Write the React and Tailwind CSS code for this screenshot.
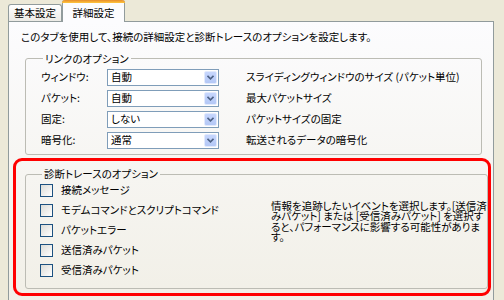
import React from "react";

const font = "font-['MS_UI_Gothic','Noto_Sans_CJK_JP',sans-serif] [font-feature-settings:'palt']";

function Combo({ value }) {
  return (
    <div className="w-[112px] h-[17px] border border-[#7F9DB9] bg-white flex items-center justify-between pl-[3px] pr-px">
      <span className="text-[10.5px] leading-none text-black">{value}</span>
      <div className="w-[13px] h-[13px] rounded-[2px] border border-[#E2EAFD] bg-gradient-to-b from-[#C6D6FD] to-[#B4C8F6] flex items-center justify-center">
        <svg width="7" height="5" viewBox="0 0 7 5">
          <path d="M0.5 0.8 L3.5 3.8 L6.5 0.8" fill="none" stroke="#4D6185" strokeWidth="1.6" />
        </svg>
      </div>
    </div>
  );
}

function Check({ label }) {
  return (
    <div className="flex items-center h-[20px]">
      <div className="w-[13px] h-[13px] border border-[#1C5180] bg-gradient-to-br from-[#DCDCD7] to-white" />
      <span className="ml-[8px] text-[10.5px] leading-none text-black">{label}</span>
    </div>
  );
}

const linkRows = [
  { label: "ウィンドウ:", value: "自動", desc: "スライディングウィンドウのサイズ (パケット単位)" },
  { label: "パケット:", value: "自動", desc: "最大パケットサイズ" },
  { label: "固定:", value: "しない", desc: "パケットサイズの固定" },
  { label: "暗号化:", value: "通常", desc: "転送されるデータの暗号化" },
];

const traceItems = [
  "接続メッセージ",
  "モデムコマンドとスクリプトコマンド",
  "パケットエラー",
  "送信済みパケット",
  "受信済みパケット",
];

const noteLines = [
  "情報を追跡したいイベントを選択します。[送信済",
  "みパケット] または [受信済みパケット] を選択す",
  "ると、パフォーマンスに影響する可能性がありま",
  "す。",
];

export default function App() {
  return (
    <div className={`w-[504px] h-[300px] bg-[#ECE9D8] overflow-hidden pl-2 pr-[10px] flex flex-col ${font}`}>
      {/* Tabs */}
      <div className="flex items-end h-[21px] shrink-0">
        <div className="h-[17px] w-[54px] border border-b-0 border-[#919B9C] rounded-t-[3px] bg-gradient-to-b from-white to-[#ECEBE6] flex items-center justify-center text-[10.5px] text-black">
          基本設定
        </div>
        <div className="relative z-10 -mb-px h-[22px] w-[63px] border border-b-0 border-t-0 border-[#919B9C] rounded-t-[3px] bg-[#FCFCFE] flex flex-col">
          <div className="h-[3px] -mx-px rounded-t-[3px] bg-gradient-to-b from-[#E68B2C] to-[#FFC73C]" />
          <div className="flex-1 flex items-center justify-center text-[10.5px] text-black">詳細設定</div>
        </div>
      </div>

      {/* Panel */}
      <div className="h-[290px] shrink-0 border border-[#919B9C] bg-gradient-to-b from-[#FCFCFE] to-[#F1EFE6] pt-[10px] px-px">
        <p className="ml-[11px] text-[10.5px] leading-none text-black">
          このタブを使用して、接続の詳細設定と診断トレースのオプションを設定します。
        </p>

        <fieldset className="mt-[11px] ml-[15px] mr-[10px] border border-[#BCBCB4] rounded-[3px] pb-[5px] pl-[15px]">
          <legend className="ml-[2px] px-[2px] text-[10.5px] leading-none text-black">リンクのオプション</legend>
          <div className="flex flex-col gap-[4px] mt-[5px]">
            {linkRows.map((r) => (
              <div key={r.label} className="flex items-center">
                <span className="w-[66px] text-[10.5px] leading-none text-black">{r.label}</span>
                <Combo value={r.value} />
                <span className="ml-[27px] text-[10.5px] leading-none text-black">{r.desc}</span>
              </div>
            ))}
          </div>
        </fieldset>

        <div className="mt-[3px] ml-[3px] mr-px border-[3px] border-[#FF0000] rounded-[9px] pt-[8px] pl-[9px] pr-[6px] pb-[4px]">
          <fieldset className="border border-[#BCBCB4] rounded-[3px] pl-[14px] pb-[7px]">
            <legend className="ml-[2px] px-[2px] text-[10.5px] leading-none text-black">診断トレースのオプション</legend>
            <div className="flex mt-[1px]">
              <div className="flex flex-col w-[231px]">
                {traceItems.map((t) => (
                  <Check key={t} label={t} />
                ))}
              </div>
              <div className="mt-[20px] flex flex-col">
                {noteLines.map((l) => (
                  <span key={l} className="h-[10.5px] whitespace-nowrap text-[10.5px] leading-[10.5px] text-black">
                    {l}
                  </span>
                ))}
              </div>
            </div>
          </fieldset>
        </div>
      </div>
    </div>
  );
}
